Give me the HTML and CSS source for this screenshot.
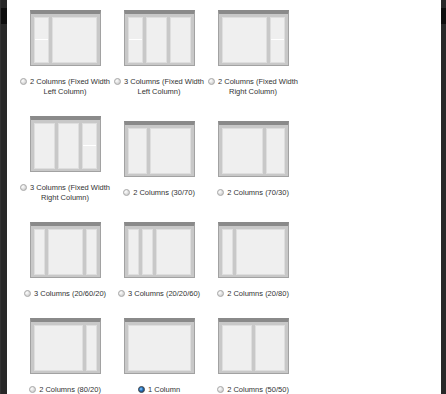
FILE: index.html
```html
<!DOCTYPE html>
<html lang="en">
<head>
    <meta charset="UTF-8">
    <meta name="viewport" content="width=device-width, initial-scale=1.0">
    <title>Choose Layout</title>
    <link rel="stylesheet" href="styles.css">
</head>
<body>
    <div class="side side-left"><div class="side-block"></div></div>

    <div class="panel">
        <table class="layouts">
            <tr>
                <td>
                    <div class="thumb"><div class="col w15 fixed"></div><div class="col grow"></div></div>
                    <label><input type="radio" name="layout"> 2 Columns (Fixed Width Left Column)</label>
                </td>
                <td>
                    <div class="thumb"><div class="col w15 fixed"></div><div class="col w21"></div><div class="col grow"></div></div>
                    <label><input type="radio" name="layout"> 3 Columns (Fixed Width Left Column)</label>
                </td>
                <td>
                    <div class="thumb"><div class="col grow"></div><div class="col w15 fixed"></div></div>
                    <label><input type="radio" name="layout"> 2 Columns (Fixed Width Right Column)</label>
                </td>
            </tr>
            <tr>
                <td>
                    <div class="thumb"><div class="col w21"></div><div class="col w21"></div><div class="col grow fixed"></div></div>
                    <label><input type="radio" name="layout"> 3 Columns (Fixed Width Right Column)</label>
                </td>
                <td>
                    <div class="thumb"><div class="col w19"></div><div class="col grow"></div></div>
                    <label><input type="radio" name="layout"> 2 Columns (30/70)</label>
                </td>
                <td>
                    <div class="thumb"><div class="col grow"></div><div class="col w19"></div></div>
                    <label><input type="radio" name="layout"> 2 Columns (70/30)</label>
                </td>
            </tr>
            <tr>
                <td>
                    <div class="thumb"><div class="col w11"></div><div class="col grow"></div><div class="col w11"></div></div>
                    <label><input type="radio" name="layout"> 3 Columns (20/60/20)</label>
                </td>
                <td>
                    <div class="thumb"><div class="col w11"></div><div class="col w11"></div><div class="col grow"></div></div>
                    <label><input type="radio" name="layout"> 3 Columns (20/20/60)</label>
                </td>
                <td>
                    <div class="thumb"><div class="col w11"></div><div class="col grow"></div></div>
                    <label><input type="radio" name="layout"> 2 Columns (20/80)</label>
                </td>
            </tr>
            <tr>
                <td>
                    <div class="thumb"><div class="col grow"></div><div class="col w11"></div></div>
                    <label><input type="radio" name="layout"> 2 Columns (80/20)</label>
                </td>
                <td>
                    <div class="thumb"><div class="col grow"></div></div>
                    <label><input type="radio" name="layout" checked> 1 Column</label>
                </td>
                <td>
                    <div class="thumb"><div class="col grow"></div><div class="col grow"></div></div>
                    <label><input type="radio" name="layout"> 2 Columns (50/50)</label>
                </td>
            </tr>
        </table>
    </div>

    <div class="side side-right"><div class="side-block"></div></div>
</body>
</html>
```

FILE: styles.css
```css
html, body { height: 100%; }
body {
    margin: 0;
    display: flex;
    background: #282828;
    font-family: "Liberation Sans", Arial, sans-serif;
    font-size: 7.5px;
    color: #333;
}
.side { background: #282828; padding-top: 8px; box-sizing: border-box; }
.side-left { width: 7px; border-left: 1px solid #333; box-sizing: border-box; }
.side-right { width: 5px; }
.side-block { height: 16px; background: #0e0e0e; }

.panel { flex: 1; background: #fff; padding-left: 11px; }

.layouts { border-collapse: collapse; table-layout: fixed; width: 282px; }
.layouts td {
    width: 94px;
    padding: 10px 0 9px;
    text-align: center;
    vertical-align: middle;
}
.layouts label { display: block; margin-top: 11px; line-height: 10px; }

.layouts input {
    -webkit-appearance: none;
    appearance: none;
    width: 7px;
    height: 7px;
    margin: 0 1px 0 0;
    border: 1px solid #aaa;
    border-radius: 50%;
    background: radial-gradient(circle at 35% 35%, #fff 0, #e2e2e2 45%, #bdbdbd 100%);
    vertical-align: -1px;
    box-sizing: border-box;
}
.layouts input:checked {
    border-color: #4a4a4a;
    background: radial-gradient(circle at 40% 40%, #9fd3ff 0, #2e80cc 35%, #1b4e84 70%, #555 100%);
}

/* thumbnail of a page layout */
.thumb {
    width: 71px;
    height: 56px;
    margin: 0 auto;
    box-sizing: border-box;
    border: 1px solid #a2a2a2;
    border-top: 4px solid #8a8a8a;
    padding: 3px 3px 2px;
    background: #c8c8c8;
    display: flex;
    gap: 3px;
}
.col {
    background: #efefef;
    border: 1px solid #dedede;
    box-sizing: border-box;
}
.col.fixed {
    background: linear-gradient(to bottom, #efefef calc(50% - 1px), #fff calc(50% - 1px), #fff 50%, #efefef 50%);
}
.grow { flex: 1; }
.w11 { width: 11px; }
.w15 { width: 15px; }
.w19 { width: 19px; }
.w21 { width: 21px; }
```
